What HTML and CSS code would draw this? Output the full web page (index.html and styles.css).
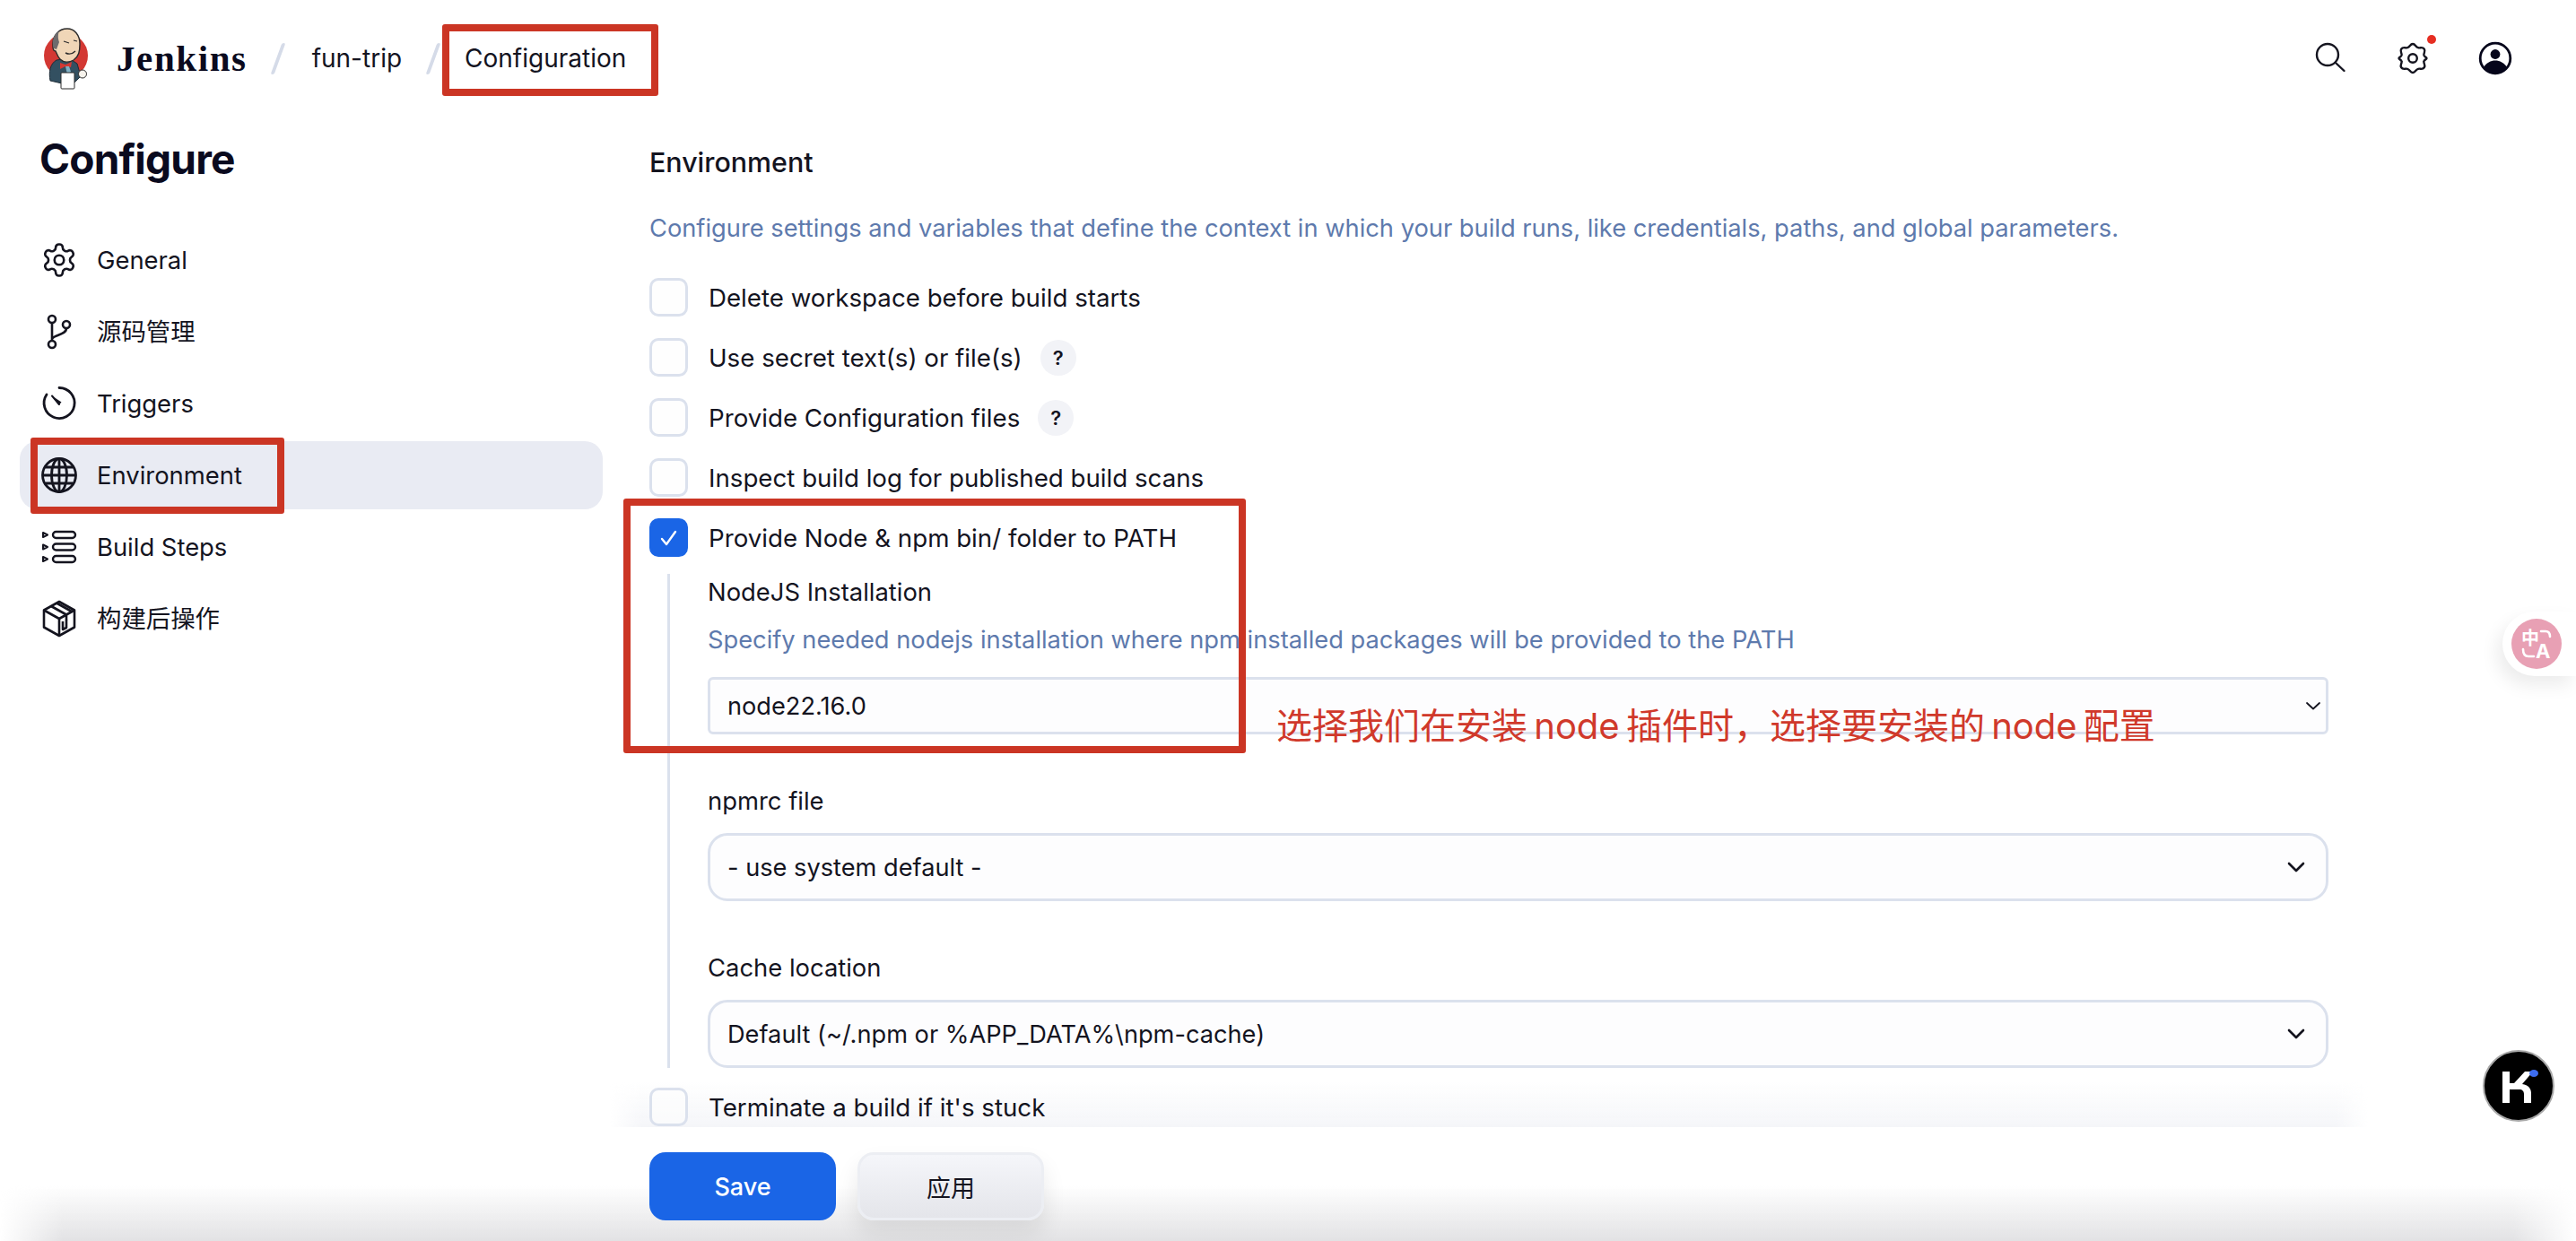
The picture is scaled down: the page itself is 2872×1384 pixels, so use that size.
FILE: index.html
```html
<!DOCTYPE html>
<html lang="zh-CN">
<head>
    <meta charset="UTF-8">
    <title>fun-trip Config - Jenkins</title>
    <link rel="stylesheet" href="styles.css">
</head>
<body>

    <header class="topbar">
        <div class="crumbs">
            <svg class="logo" viewBox="0 0 56 70" width="56" height="70">
                <circle cx="28.500" cy="32" r="24.500" fill="#d33833"/>
                <path d="M11 60c-2-10 0-19 7-23l14-2 9 6 4 14-8 8H24z" fill="#335061" stroke="#1d2b36" stroke-width="1"/>
                <path d="M14 22C13 9 21 2 30 2c8 0 14 7 14 17 0 8-1 14-7 18-5 3-11 3-15-1-3-3-4-7-5-9-2 0-3-2-3-5z" fill="#f0d6b7" stroke="#2b2b2b" stroke-width="1.400"/>
                <path d="M15 24c-3-8 0-16 6-20-2 6-1 10 0 13l-3 8z" fill="#6d6b6d"/>
                <path d="M26 16l6 2M37 15l4 1" stroke="#2b2b2b" stroke-width="1.200" fill="none"/>
                <path d="M28 29c4 2 8 1 11-2" stroke="#2b2b2b" stroke-width="1.400" fill="none"/>
                <path d="M22 40l6 2 7-3-1 6-6-1-6 3z" fill="#d33833"/>
                <path d="M28 44l4 0 2 6-4 3z" fill="#81b0c4"/>
                <rect x="23" y="51" width="15" height="18" rx="1" fill="#fff" stroke="#2b2b2b" stroke-width="1"/>
                <circle cx="47" cy="52.500" r="4.500" fill="#f7f3ec" stroke="#2b2b2b" stroke-width="1"/>
            </svg>
            <span class="brand">Jenkins</span>
            <span class="slash"></span>
            <span class="crumb">fun-trip</span>
            <span class="slash slash-b"></span>
            <span class="crumb current">Configuration</span>
        </div>
        <div class="actions">
            <svg viewBox="0 0 36 36" width="36" height="36" fill="none" stroke="#14141f" stroke-width="2.400" stroke-linecap="round">
                <circle cx="14" cy="14" r="12"/>
                <path d="M23 23l9.500 9"/>
            </svg>
            <span class="gear-wrap">
                <svg viewBox="0 0 36 36" width="36" height="36" fill="none" stroke="#14141f" stroke-width="2.400" stroke-linejoin="round">
                    <path d="M18 2c3 0 3 3.400 6 4.200 2.800.7 4.800-1.400 6.800 1.500 1.800 2.800-.8 4-.4 6.800.2 2 3.100 2.200 3.100 3.500s-2.900 1.500-3.100 3.500c-.4 2.800 2.200 4 .4 6.800-2 2.900-4 .8-6.800 1.500-3 .8-3 4.200-6 4.200s-3-3.400-6-4.200c-2.800-.7-4.800 1.400-6.800-1.500-1.800-2.800.8-4 .4-6.800-.2-2-3.100-2.200-3.100-3.500s2.900-1.500 3.100-3.500c.4-2.800-2.200-4-.4-6.800 2-2.900 4-.8 6.800-1.500 3-.8 3-4.200 6-4.200z"/>
                    <circle cx="18" cy="18" r="4.800"/>
                </svg>
                <span class="dot"></span>
            </span>
            <svg viewBox="0 0 38 38" width="38" height="38">
                <circle cx="19" cy="19" r="16.800" fill="none" stroke="#05051a" stroke-width="2.800"/>
                <circle cx="19" cy="14.500" r="5.400" fill="#05051a"/>
                <path d="M6 29c3-5 8-7.500 13-7.500s10 2.500 13 7.500c-3 4-8 6.500-13 6.500S9 33 6 29z" fill="#05051a"/>
            </svg>
        </div>
    </header>

    <div class="page">
        <aside class="sidebar">
            <h1>Configure</h1>
            <nav class="menu">
                <a class="menu-item">
                    <svg viewBox="0 0 24 24" width="42" height="42" fill="none" stroke="#14141f" stroke-width="1.500" stroke-linejoin="round">
                        <path d="M12.220 2h-.44a2 2 0 0 0-2 2v.18a2 2 0 0 1-1 1.730l-.43.25a2 2 0 0 1-2 0l-.15-.08a2 2 0 0 0-2.730.73l-.22.38a2 2 0 0 0 .73 2.730l.15.1a2 2 0 0 1 1 1.720v.51a2 2 0 0 1-1 1.740l-.15.09a2 2 0 0 0-.73 2.730l.22.38a2 2 0 0 0 2.730.73l.15-.08a2 2 0 0 1 2 0l.43.25a2 2 0 0 1 1 1.730V20a2 2 0 0 0 2 2h.44a2 2 0 0 0 2-2v-.18a2 2 0 0 1 1-1.730l.43-.25a2 2 0 0 1 2 0l.15.08a2 2 0 0 0 2.730-.73l.22-.39a2 2 0 0 0-.73-2.730l-.15-.08a2 2 0 0 1-1-1.740v-.5a2 2 0 0 1 1-1.740l.15-.09a2 2 0 0 0 .73-2.730l-.22-.38a2 2 0 0 0-2.730-.73l-.15.08a2 2 0 0 1-2 0l-.43-.25a2 2 0 0 1-1-1.730V4a2 2 0 0 0-2-2z"/>
                        <circle cx="12" cy="12" r="3"/>
                    </svg>
                    <span>General</span>
                </a>
                <a class="menu-item">
                    <svg viewBox="0 0 42 42" width="42" height="42" fill="none" stroke="#14141f" stroke-width="2.600">
                        <circle cx="13" cy="7" r="4"/>
                        <circle cx="13" cy="35" r="4"/>
                        <circle cx="29" cy="13" r="4"/>
                        <path d="M13 11v20M13 29c2-5 16-4 16-12"/>
                    </svg>
                    <span>源码管理</span>
                </a>
                <a class="menu-item">
                    <svg viewBox="0 0 42 42" width="42" height="42" fill="none" stroke="#14141f" stroke-width="2.800" stroke-linecap="round">
                        <path d="M21 3.500a17 17 0 1 1-14 7.500"/>
                        <path d="M21 22l-8-9.500" stroke-width="2"/>
                        <path d="M13 12.500l10.500 7-3 3.500z" fill="#14141f" stroke="none"/>
                    </svg>
                    <span>Triggers</span>
                </a>
                <a class="menu-item active">
                    <svg viewBox="0 0 42 42" width="42" height="42" fill="none" stroke="#14141f" stroke-width="2.800">
                        <circle cx="21" cy="21" r="18.500"/>
                        <ellipse cx="21" cy="21" rx="8.500" ry="18.500"/>
                        <path d="M21 2.500v37M2.500 21h37M5.500 12h31M5.500 30h31"/>
                    </svg>
                    <span>Environment</span>
                </a>
                <a class="menu-item">
                    <svg viewBox="0 0 42 42" width="42" height="42" fill="none" stroke="#14141f" stroke-width="2.400" stroke-linejoin="round">
                        <rect x="14" y="4" width="25" height="7" rx="3.500"/>
                        <rect x="14" y="17.500" width="25" height="7" rx="3.500"/>
                        <rect x="14" y="31" width="25" height="7" rx="3.500"/>
                        <path d="M3 5l5 2.500L3 10zM3 18.500l5 2.500-5 2.500zM3 32l5 2.500L3 37z" stroke-width="2"/>
                    </svg>
                    <span>Build Steps</span>
                </a>
                <a class="menu-item">
                    <svg viewBox="0 0 42 42" width="42" height="42" fill="none" stroke="#14141f" stroke-width="2.600" stroke-linejoin="round">
                        <path d="M21 2l17 9.500v19L21 40 4 30.500v-19z"/>
                        <path d="M4 11.500L21 21l17-9.500M21 21v19M12 7l17 9.500v6M18 3.500l17 9.500"/>
                        <path d="M29 22v9l-4 2v-9"/>
                    </svg>
                    <span>构建后操作</span>
                </a>
            </nav>
        </aside>

        <main class="content">
            <div class="top-fade"></div>
            <h2>Environment</h2>
            <p class="hint">Configure settings and variables that define the context in which your build runs, like credentials, paths, and global parameters.</p>

            <div class="check-row"><span class="box"></span><span>Delete workspace before build starts</span></div>
            <div class="check-row"><span class="box"></span><span>Use secret text(s) or file(s)</span><span class="help">?</span></div>
            <div class="check-row"><span class="box"></span><span>Provide Configuration files</span><span class="help">?</span></div>
            <div class="check-row"><span class="box"></span><span>Inspect build log for published build scans</span></div>
            <div class="check-row">
                <span class="box checked">
                    <svg viewBox="0 0 24 24" width="24" height="24" fill="none" stroke="#fff" stroke-width="2.400" stroke-linecap="round" stroke-linejoin="round"><path d="M4 13l5 6L19 5"/></svg>
                </span>
                <span>Provide Node &amp; npm bin/ folder to PATH</span>
            </div>

            <div class="nested">
                <div class="field field-first">
                    <div class="field-label">NodeJS Installation</div>
                    <div class="field-hint">Specify needed nodejs installation where npm installed packages will be provided to the PATH</div>
                    <div class="select select-small">
                        <span>node22.16.0</span>
                        <svg viewBox="0 0 16 9" width="16" height="9" fill="none" stroke="#14141f" stroke-width="1.800" stroke-linecap="round" stroke-linejoin="round"><path d="M1 1l7 6.500L15 1"/></svg>
                    </div>
                </div>
                <div class="field">
                    <div class="field-label">npmrc file</div>
                    <div class="select">
                        <span>- use system default -</span>
                        <svg viewBox="0 0 20 12" width="20" height="12" fill="none" stroke="#14141f" stroke-width="2.600" stroke-linecap="round" stroke-linejoin="round"><path d="M2 2l8 8 8-8"/></svg>
                    </div>
                </div>
                <div class="field">
                    <div class="field-label">Cache location</div>
                    <div class="select">
                        <span>Default (~/.npm or %APP_DATA%\npm-cache)</span>
                        <svg viewBox="0 0 20 12" width="20" height="12" fill="none" stroke="#14141f" stroke-width="2.600" stroke-linecap="round" stroke-linejoin="round"><path d="M2 2l8 8 8-8"/></svg>
                    </div>
                </div>
            </div>

            <div class="check-row check-last"><span class="box"></span><span>Terminate a build if it's stuck</span></div>
        </main>
    </div>

    <footer class="bottombar">
        <button class="btn btn-save">Save</button>
        <button class="btn btn-apply">应用</button>
    </footer>

    <!-- red annotations drawn over the screenshot -->
    <div class="mark mark-crumb"></div>
    <div class="mark mark-menu"></div>
    <div class="mark mark-node"></div>
    <div class="note">选择我们在安装 node 插件时，选择要安装的 node 配置</div>

    <!-- browser extension widgets -->
    <div class="translate">
        <span class="translate-icon">
            <svg viewBox="0 0 56 56" width="56" height="56" fill="none" stroke="#fff" stroke-width="2.600" stroke-linecap="round">
                <text x="11" y="29" class="translate-zh">中</text>
                <text x="27" y="44" class="translate-en">A</text>
                <path d="M33 14h5c3 0 5 2 5 6M13 34c0 5 2 8 6 8h6"/>
            </svg>
        </span>
    </div>
    <div class="kimi">
        <svg viewBox="0 0 76 76" width="76" height="76">
            <path d="M20 22h8v13h5l12-13h9L42 36c7 1 10 5 10 10v11h-8V47c0-3-2-5-5-5H28v15h-8z" fill="#fff"/>
            <ellipse cx="55" cy="24" rx="5" ry="4" fill="#3d6df0"/>
        </svg>
    </div>

</body>
</html>
```
FILE: styles.css
```css
* {
    box-sizing: border-box;
}
html, body {
    height: 100%;
}
body {
    margin: 0;
    height: 1384px;
    overflow: hidden;
    position: relative;
    background-color: #fff;
    color: #14141f;
    font-family: Inter, "Noto Sans CJK SC", sans-serif;
    font-size: 27.4px;
}

/* top bar */
.topbar {
    height: 130px;
    display: flex;
    justify-content: space-between;
    align-items: center;
    padding: 0 71px 0 45px;
}
.crumbs {
    display: flex;
    align-items: center;
}
.logo {
    margin-right: 29px;
}
.brand {
    font-family: "Liberation Serif", serif;
    font-weight: 700;
    font-size: 41px;
    color: #0a0a1e;
    letter-spacing: 1.600px;
}
.crumb {
    font-size: 28px;
}
.slash {
    width: 4px;
    height: 35px;
    margin: 0 36px 0 32px;
    border-radius: 2px;
    background-color: #d5dbe8;
    transform: skewX(-20deg);
}
.slash-b {
    margin: 0 33px;
}
.actions {
    display: flex;
    align-items: center;
    gap: 55px;
}
.gear-wrap {
    position: relative;
    display: flex;
}
.dot {
    position: absolute;
    top: -8px;
    right: -8px;
    width: 10px;
    height: 10px;
    border-radius: 50%;
    background-color: #e62e22;
}

/* layout */
.page {
    display: flex;
    height: 1127px;
    overflow: hidden;
}
.sidebar {
    width: 724px;
    flex: none;
    padding: 0 0 0 22px;
}
.sidebar h1 {
    margin: 22px 0 50px 22px;
    font-size: 46px;
    line-height: 50px;
    font-weight: 700;
    letter-spacing: -.8px;
    color: #0a0a1e;
}
.menu {
    width: 650px;
    display: flex;
    flex-direction: column;
    gap: 4px;
}
.menu-item {
    height: 76px;
    display: flex;
    align-items: center;
    gap: 21px;
    padding-left: 23px;
    border-radius: 20px;
    line-height: 36px;
}
.menu-item.active {
    background-color: #e9ebf3;
}

/* main column */
.content {
    flex: 1;
    position: relative;
    isolation: isolate;
    padding-right: 276px;
}
.content::after {
    content: "";
    position: absolute;
    z-index: -1;
    left: -44px;
    right: 232px;
    bottom: 0;
    height: 52px;
    background: linear-gradient(rgba(244, 245, 249, 0), #f5f6f9);
    -webkit-mask-image: linear-gradient(90deg, transparent, #000 36px, #000 calc(100% - 36px), transparent);
    mask-image: linear-gradient(90deg, transparent, #000 36px, #000 calc(100% - 36px), transparent);
}
.top-fade {
    position: absolute;
    left: 14px;
    top: -130px;
    width: 236px;
    height: 130px;
    background-color: #fcfcfc;
    clip-path: polygon(0 0, 100% 0, 92% 40%, 80% 70%, 78% 100%, 20% 100%, 12% 45%);
}
.content h2 {
    margin: 33px 0 0;
    font-size: 30.400px;
    line-height: 36px;
    font-weight: 450;
}
.hint {
    margin: 38px 0 25px;
    font-size: 27.280px;
    line-height: 36px;
    color: #5e7aad;
}
.check-row {
    height: 67px;
    display: flex;
    align-items: center;
    font-size: 27.700px;
    font-weight: 420;
}
.box {
    width: 43px;
    height: 43px;
    flex: none;
    display: flex;
    align-items: center;
    justify-content: center;
    margin-right: 23px;
    border: 3px solid #dbe1ed;
    border-radius: 10px;
    background-color: rgba(253, 253, 254, .6);
}
.box.checked {
    background-color: #1a65e6;
    border-color: #1a65e6;
}
.help {
    width: 40px;
    height: 40px;
    margin-left: 20px;
    display: flex;
    align-items: center;
    justify-content: center;
    border-radius: 50%;
    background-color: #f2f3f7;
    font-size: 22px;
    font-weight: 600;
}

/* nested block */
.nested {
    margin: 7px 0 0 20px;
    padding-left: 42px;
    border-left: 3px solid #dbe1ed;
    height: 551px;
}
.field {
    padding-top: 56px;
}
.field-first {
    padding-top: 2px;
}
.field-label {
    line-height: 36px;
    font-weight: 420;
}
.field-hint {
    margin-top: 18px;
    font-size: 27.280px;
    line-height: 36px;
    color: #5e7aad;
}
.select {
    height: 76px;
    margin-top: 18px;
    padding: 0 23px 0 19px;
    display: flex;
    align-items: center;
    justify-content: space-between;
    border: 3px solid #dbe1ed;
    border-radius: 22px;
    background-color: #fdfdfe;
    font-size: 27.200px;
}
.select-small {
    height: 64px;
    margin-top: 23px;
    border-radius: 6px;
    padding-right: 6px;
}
.check-last {
    margin-top: 10px;
}

/* sticky save bar */
.bottombar {
    height: 127px;
    position: relative;
    display: flex;
    gap: 24px;
    padding: 28px 0 0 724px;
}
.bottombar::before {
    content: "";
    position: absolute;
    left: 0;
    right: 0;
    bottom: 0;
    height: 62px;
    background: linear-gradient(rgba(226, 226, 228, 0), #e2e2e4);
    -webkit-mask-image: linear-gradient(90deg, transparent, #000 70px, #000 calc(100% - 70px), transparent);
    mask-image: linear-gradient(90deg, transparent, #000 70px, #000 calc(100% - 70px), transparent);
}
.btn {
    width: 208px;
    height: 76px;
    position: relative;
    border-radius: 18px;
    font-family: inherit;
    font-size: 27px;
    font-weight: 500;
}
.btn-save {
    background-color: #1a65e6;
    border: none;
    color: #fff;
}
.btn-apply {
    background: linear-gradient(#f5f6fa, #e4e5ea);
    border: 3px solid #eceef3;
    color: #14141f;
    font-weight: 400;
    box-shadow: 0 14px 26px rgba(0, 0, 0, .09);
}

/* annotations */
.mark {
    position: absolute;
    border: 8px solid #cb3524;
    border-radius: 3px;
}
.mark-crumb {
    left: 493px;
    top: 27px;
    width: 241px;
    height: 80px;
}
.mark-menu {
    left: 34px;
    top: 488px;
    width: 283px;
    height: 85px;
}
.mark-node {
    left: 695px;
    top: 556px;
    width: 694px;
    height: 284px;
}
.note {
    position: absolute;
    left: 1423px;
    top: 785px;
    font-size: 40px;
    line-height: 50px;
    word-spacing: -4px;
    color: #d0392b;
    white-space: nowrap;
}

/* extension widgets */
.translate {
    position: absolute;
    left: 2790px;
    right: 0;
    top: 682px;
    height: 72px;
    display: flex;
    align-items: center;
    padding-left: 10px;
    background-color: #fff;
    border-radius: 36px 0 0 36px;
    box-shadow: -6px 10px 20px rgba(0, 0, 0, .08);
}
.translate-icon {
    width: 56px;
    height: 56px;
    border-radius: 50%;
    background-color: #e8a0b4;
}
.translate-zh {
    fill: #fff;
    stroke: none;
    font-size: 20px;
    font-weight: 700;
}
.translate-en {
    fill: #fff;
    stroke: none;
    font-size: 22px;
    font-weight: 700;
}
.kimi {
    position: absolute;
    left: 2768px;
    top: 1171px;
    width: 80px;
    height: 80px;
    border-radius: 50%;
    background-color: #000;
    border: 2px solid #a8a8a8;
}
```
